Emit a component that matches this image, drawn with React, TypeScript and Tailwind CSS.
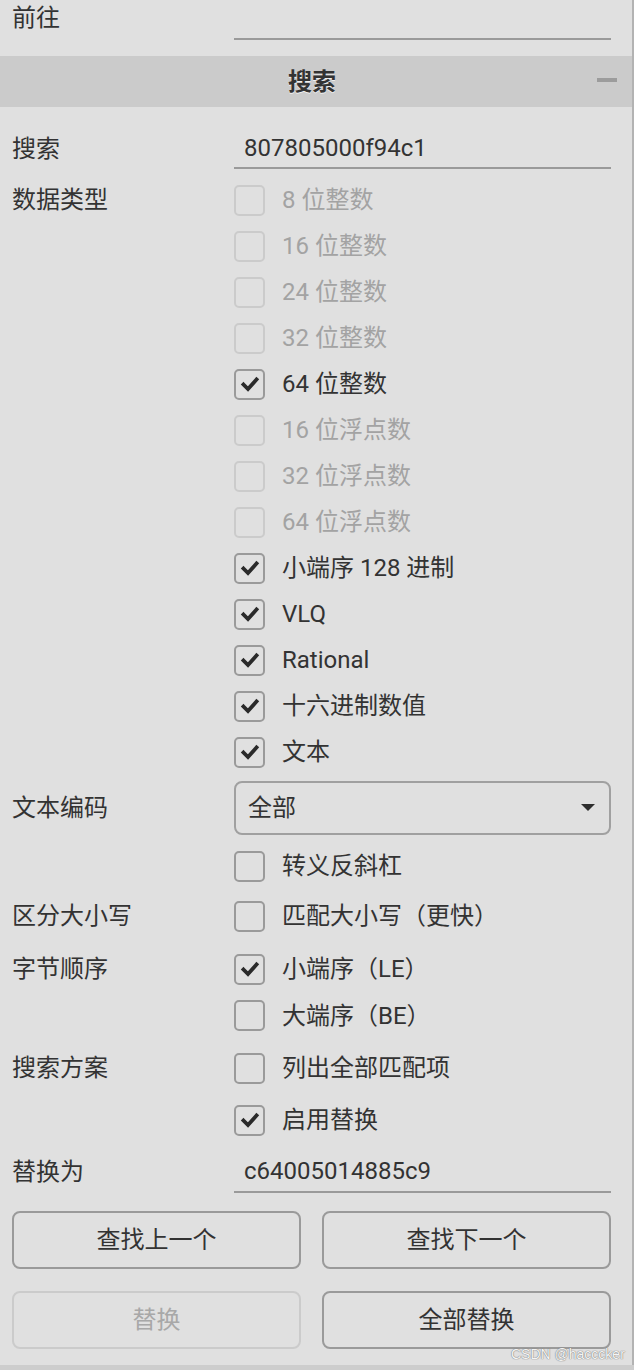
import React from "react";

const FONT = { fontFamily: 'Roboto, "Noto Sans CJK SC", "Noto Sans", sans-serif' };

function Check({ checked, disabled }: { checked?: boolean; disabled?: boolean }) {
  return (
    <div
      className={`w-[31px] h-[31px] rounded-[5px] border-2 flex items-center justify-center shrink-0 ${
        disabled ? "border-[#cbcbcb]" : "border-[#9a9a9a]"
      }`}
    >
      {checked && (
        <svg width="20" height="20" viewBox="0 0 20 20">
          <path d="M3.5 10.5 L8 15 L16.5 5.5" fill="none" stroke="#2a2a2a" strokeWidth="3.8" strokeLinecap="square" strokeLinejoin="miter" />
        </svg>
      )}
    </div>
  );
}

function CheckRow({
  label,
  text,
  checked,
  disabled,
  h = "h-[46px]",
  mt = "",
}: {
  label?: string;
  text: string;
  checked?: boolean;
  disabled?: boolean;
  h?: string;
  mt?: string;
}) {
  return (
    <div className={`flex items-center ${h} ${mt}`}>
      <div className="w-[222px] shrink-0 text-[#333]">{label}</div>
      <Check checked={checked} disabled={disabled} />
      <div className={`ml-[17px] ${disabled ? "text-[#a3a3a3]" : "text-[#333]"}`}>{text}</div>
    </div>
  );
}

export default function App() {
  const types: [string, boolean, boolean][] = [
    ["8 位整数", false, true],
    ["16 位整数", false, true],
    ["24 位整数", false, true],
    ["32 位整数", false, true],
    ["64 位整数", true, false],
    ["16 位浮点数", false, true],
    ["32 位浮点数", false, true],
    ["64 位浮点数", false, true],
    ["小端序 128 进制", true, false],
    ["VLQ", true, false],
    ["Rational", true, false],
    ["十六进制数值", true, false],
    ["文本", true, false],
  ];
  return (
    <div style={FONT} className="w-[634px] h-[1370px] bg-[#e0e0e0] text-[24px] leading-none relative overflow-hidden">
      <div className="w-[634px] h-[1365px] border-r-2 border-[#b3b3b3] flex flex-col">
        {/* 前往 */}
        <div className="flex h-[40px] pl-[12px]">
          <div className="w-[222px] shrink-0 text-[#333] pt-[6px]">前往</div>
          <div className="w-[377px] h-[40px] border-b-2 border-[#9a9a9a]" />
        </div>
        {/* header */}
        <div className="mt-[16px] h-[51px] bg-[#cbcbcb] flex items-center relative">
          <div className="w-[624px] text-center font-bold text-[#333] text-[24px] [text-shadow:0_1px_0_#f0f0f0]">搜索</div>
          <div className="absolute left-[597px] top-[22px] w-[20px] h-[4px] bg-[#9c9c9c]" />
        </div>
        <div className="pl-[12px] flex flex-col">
          {/* 搜索 */}
          <div className="flex items-center h-[41px] mt-[21px]">
            <div className="w-[222px] shrink-0 text-[#333]">搜索</div>
            <div className="w-[377px] h-[41px] border-b-2 border-[#9a9a9a] flex items-center pl-[10px] text-[#333]">
              807805000f94c1
            </div>
          </div>
          {/* types */}
          <div className="mt-[8px] flex flex-col">
            {types.map(([t, c, d], i) => (
              <CheckRow key={t} label={i === 0 ? "数据类型" : ""} text={t} checked={c} disabled={d} />
            ))}
          </div>
          {/* 文本编码 */}
          <div className="flex items-center h-[54px] mt-[6px]">
            <div className="w-[222px] shrink-0 text-[#333]">文本编码</div>
            <div className="w-[377px] h-[54px] border-2 border-[#a0a0a0] rounded-[8px] flex items-center justify-between pl-[12px] pr-[14px] text-[#333]">
              <span>全部</span>
              <svg width="14" height="8" viewBox="0 0 14 8">
                <path d="M0 0 L14 0 L7 7 Z" fill="#2e2e2e" />
              </svg>
            </div>
          </div>
          <CheckRow text="转义反斜杠" mt="mt-[8px]" />
          <CheckRow label="区分大小写" text="匹配大小写（更快）" mt="mt-[4px]" />
          <CheckRow label="字节顺序" text="小端序（LE）" checked mt="mt-[7px]" />
          <CheckRow text="大端序（BE）" h="h-[47px]" />
          <CheckRow label="搜索方案" text="列出全部匹配项" mt="mt-[6px]" />
          <CheckRow text="启用替换" checked mt="mt-[6px]" />
          {/* 替换为 */}
          <div className="flex items-center h-[42px] mt-[8px]">
            <div className="w-[222px] shrink-0 text-[#333]">替换为</div>
            <div className="w-[377px] h-[42px] border-b-2 border-[#9a9a9a] flex items-center pl-[10px] text-[#333]">
              c64005014885c9
            </div>
          </div>
          {/* buttons */}
          <div className="grid grid-cols-[289px_289px] gap-x-[21px] gap-y-[22px] mt-[18px]">
            <div className="h-[58px] border-2 border-[#9a9a9a] rounded-[8px] flex items-center justify-center text-[#333]">查找上一个</div>
            <div className="h-[58px] border-2 border-[#9a9a9a] rounded-[8px] flex items-center justify-center text-[#333]">查找下一个</div>
            <div className="h-[58px] border-2 border-[#cbcbcb] rounded-[8px] flex items-center justify-center text-[#a8a8a8]">替换</div>
            <div className="h-[58px] border-2 border-[#9a9a9a] rounded-[8px] flex items-center justify-center text-[#333]">全部替换</div>
          </div>
        </div>
      </div>
      <div className="h-[5px] bg-[#cdcdcd]" />
      <div className="absolute left-[511px] top-[1347px] text-[14px] text-[#f4f4f4] [text-shadow:0_0_1px_#777,0_0_1px_#777]" style={{ fontFamily: '"Liberation Sans", Arial, sans-serif' }}>
        CSDN @hacccker
      </div>
    </div>
  );
}
